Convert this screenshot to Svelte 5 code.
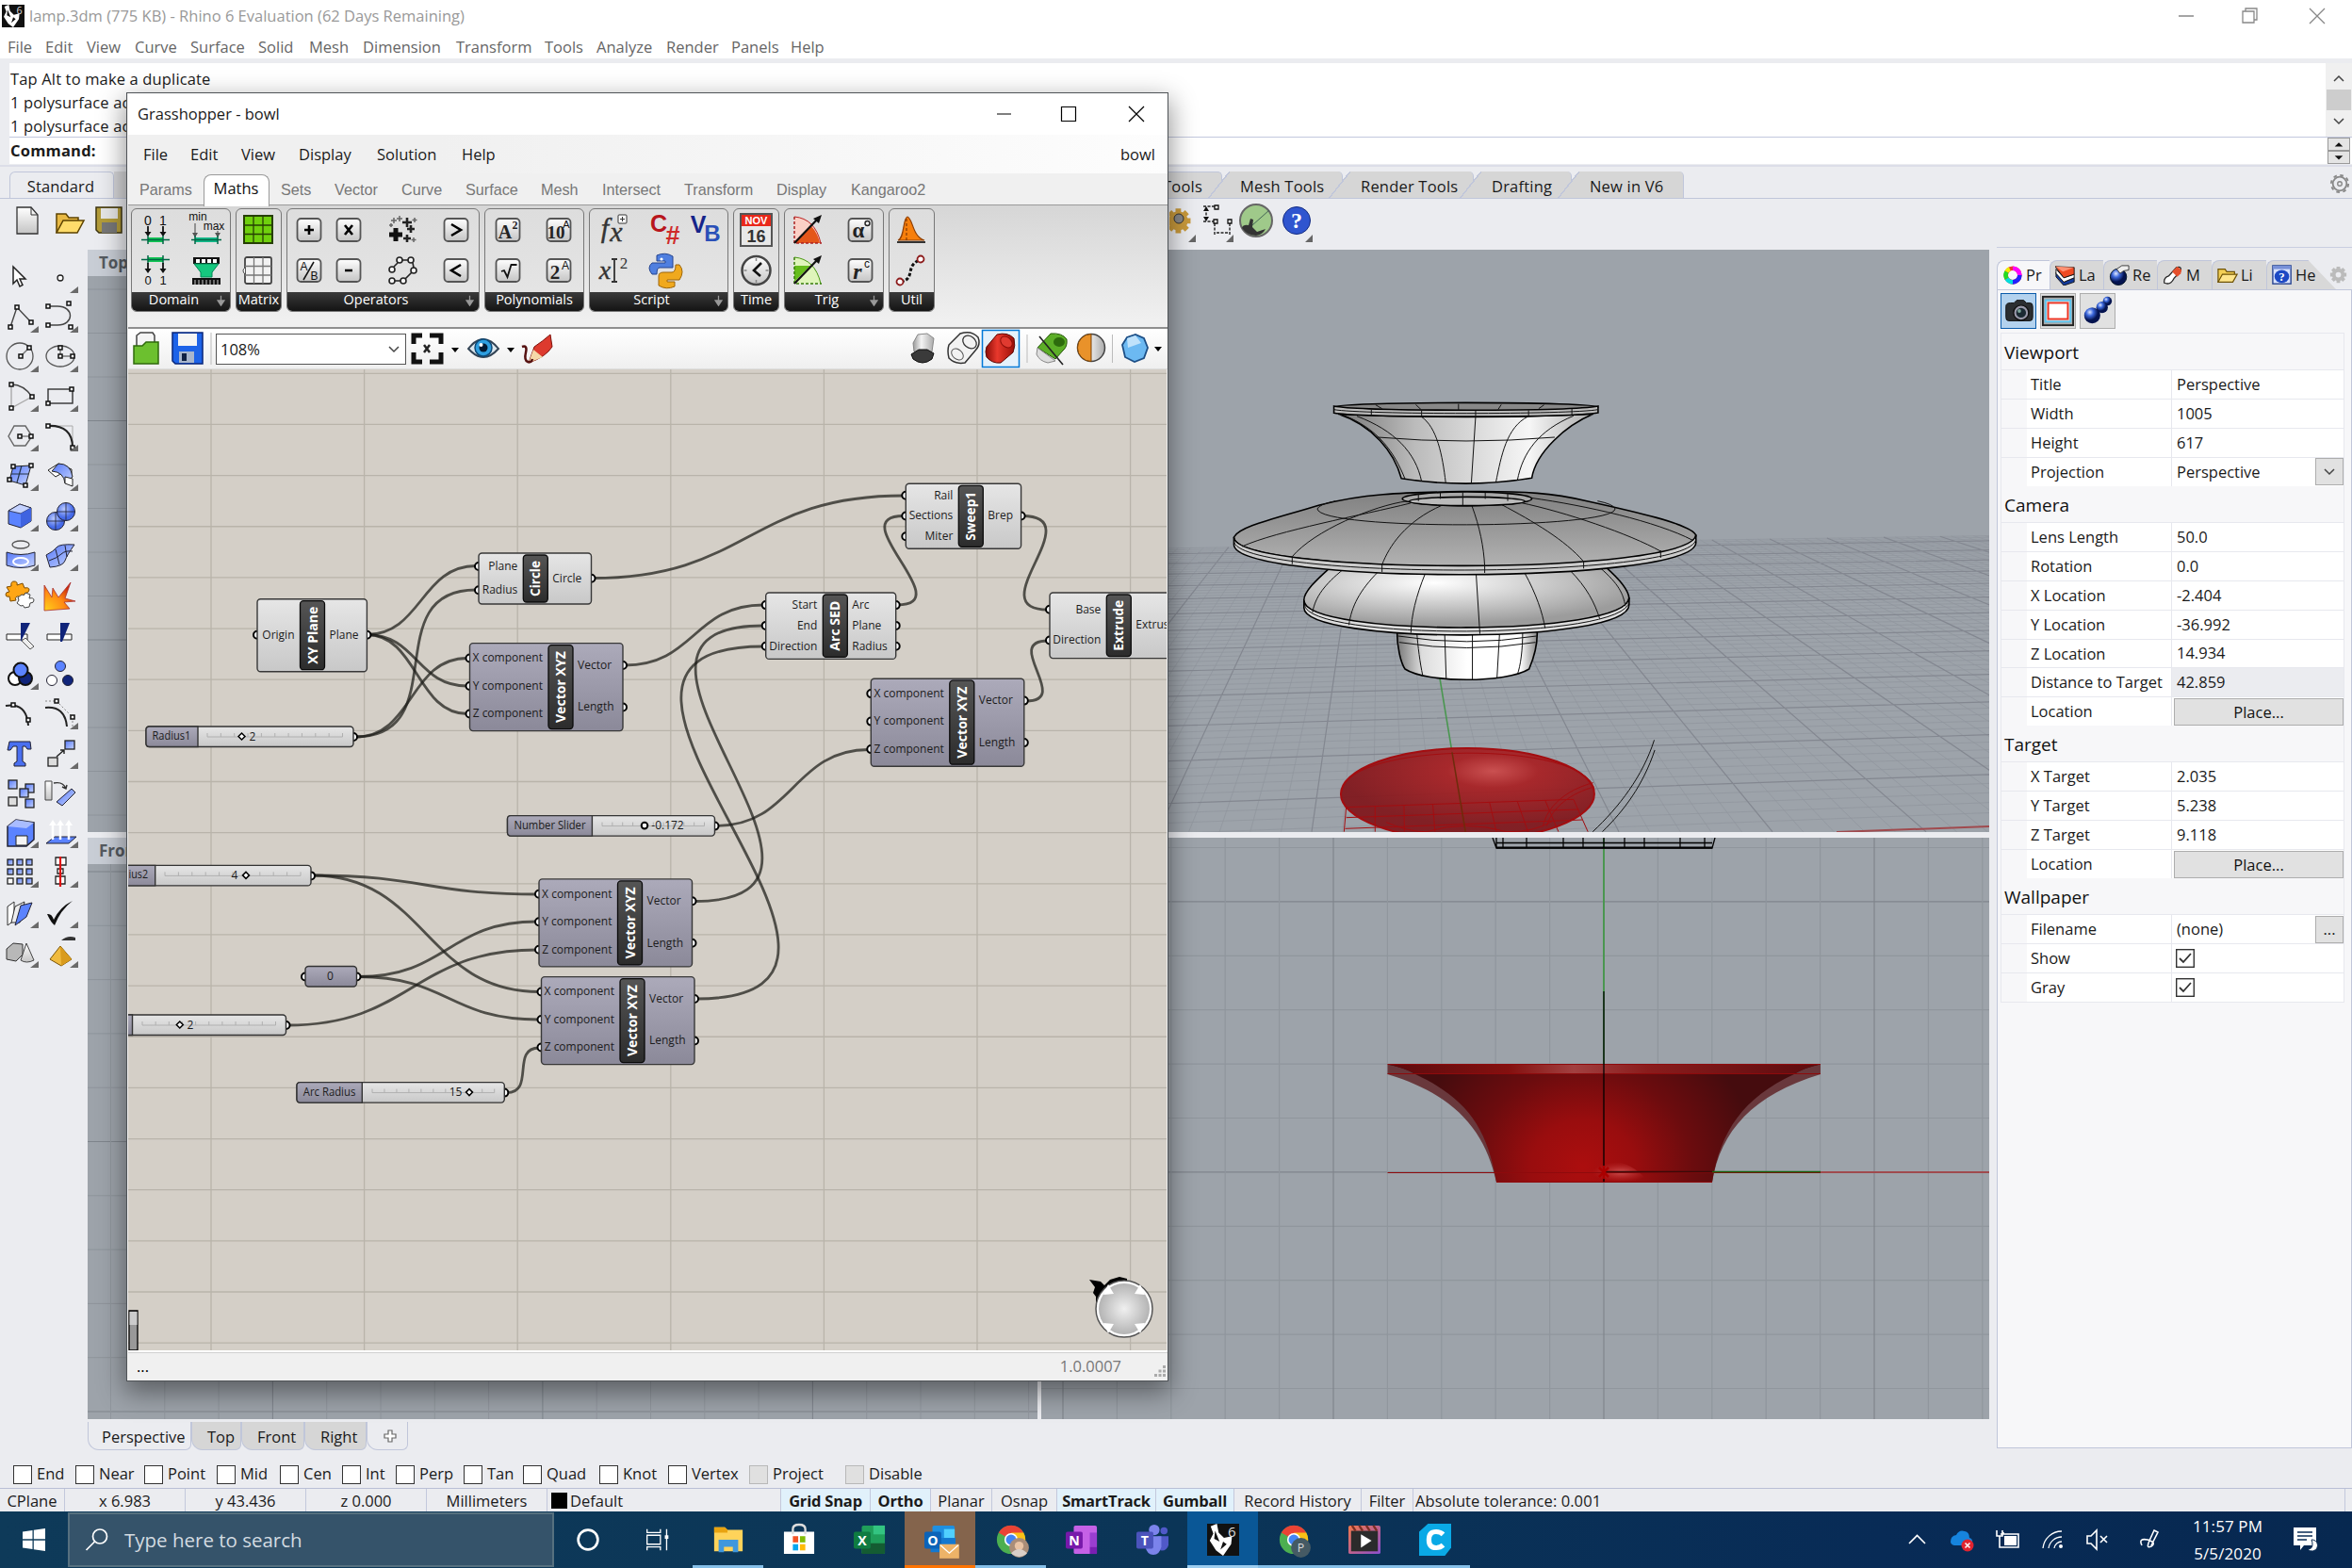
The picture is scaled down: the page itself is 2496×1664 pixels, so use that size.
<script>
  const menu = [['File',40],['Edit',44],['View',51],['Curve',59],['Surface',72],['Solid',54],['Mesh',57],['Dimension',99],['Transform',94],['Tools',55],['Analyze',74],['Render',69],['Panels',63],['Help',50]];
  const ghMenu = [['File',50],['Edit',54],['View',61],['Display',83],['Solution',90],['Help',50]];
  const ghTabsAfter = [['Sets',57],['Vector',71],['Curve',68],['Surface',80],['Mesh',65],['Intersect',87],['Transform',98],['Display',79],['Kangaroo2',90]];
  const toolTabs = [['Mesh Tools',144],['Render Tools',155],['Drafting',120],['New in V6',135]];

  const box = (g) => `<rect x="4.500" y="5" width="25" height="24" rx="4" fill="url(#gBtn)" stroke="#555" stroke-width="1.800"/>${g}`;
  const t = (s, x, y, size, extra = '') => `<text x="${x}" y="${y}" font-size="${size}" text-anchor="middle" ${extra}>${s}</text>`;
  const serif = 'font-family="Liberation Serif" font-weight="700" fill="#222"';
  const mono = 'font-family="Liberation Sans" fill="#111"';
  const arrowsDown = (y) => `<path d="M9 ${y}v9M25 ${y}v9" stroke="#111" stroke-width="1.800"/><path d="M5.500 ${y + 6}h7l-3.500 5zM21.500 ${y + 6}h7l-3.500 5z" fill="#111"/>`;
  const R = {
    dom1: t('0', 9, 12, 14, mono) + t('1', 25, 12, 14, mono) + arrowsDown(13) + '<rect x="9" y="25" width="16" height="5" fill="#12c454"/><path d="M2 27.500h30M9 23v9M25 23v9" stroke="#064" stroke-width="1.500"/>',
    dom2: '<rect x="9" y="3" width="16" height="5" fill="#12c454"/><path d="M2 5.500h30M9 1v9M25 1v9" stroke="#064" stroke-width="1.500"/>' + arrowsDown(9) + t('0', 9, 32, 13, mono) + t('1', 25, 32, 13, mono),
    minmax: t('min', 8, 7, 12, mono) + t('max', 25, 17, 12, mono) + '<path d="M5 10v14M29 18v6" stroke="#777" stroke-width="1.500"/><path d="M2 20h6l-3 5zM26 20h6l-3 5z" fill="#555"/><rect x="5" y="25" width="24" height="5" fill="#14b98a"/><path d="M1 27.500h32M5 23v9M29 23v9" stroke="#064" stroke-width="1.500"/>',
    funnel: '<path d="M3 3h28v7h-28z" fill="#111"/><path d="M6 5h4v4h-4zM12 5h4v4h-4zM18 5h4v4h-4zM24 5h4v4h-4z" fill="#fff"/><path d="M4 10h26l-7 9v5h-12v-5z" fill="#16c77e" stroke="#085"/><path d="M2 25h30v7h-30z" fill="#111"/><path d="M5 27v5M9 27v5M13 27v5M17 27v5M21 27v5M25 27v5M29 27v5" stroke="#ccc"/>',
    grid1: '<rect x="2" y="2" width="30" height="29" fill="#6fd00d" stroke="#263f04" stroke-width="2"/><path d="M12 2v29M22 2v29M2 12h30M2 21.500h30" stroke="#263f04" stroke-width="1.300"/>',
    grid2: '<rect x="3" y="3" width="28" height="28" rx="2" fill="#f2f2f2" stroke="#444" stroke-width="1.800"/><path d="M12.500 3v28M22 3v28M3 12.500h28M3 22h28" stroke="#777" stroke-width="1.300"/><path d="M3 14q-4 3 0 7" fill="#fff" stroke="#444"/>',
    plus: box('<path d="M17 12v10M12 17h10" stroke="#000" stroke-width="2.600"/>'),
    times: box('<path d="M13 12l8 10M21 12l-8 10" stroke="#000" stroke-width="2.600"/>'),
    minus: box('<path d="M13 17h8" stroke="#000" stroke-width="2.600"/>'),
    div: box(t('A', 11.500, 17, 12, mono) + t('B', 22.500, 27, 12, mono) + '<path d="M22 8L11 27" stroke="#111" stroke-width="1.500"/>'),
    gt: box('<path d="M12 11l10 6-10 6" fill="none" stroke="#000" stroke-width="2.600"/>'),
    lt: box('<path d="M22 11l-10 6 10 6" fill="none" stroke="#000" stroke-width="2.600"/>'),
    massadd: '<path d="M10 15v14M3 22h14" stroke="#111" stroke-width="5"/><path d="M22 4v10M17 9h10M26 12v8M22 16h8M22 22v8M18 26h8" stroke="#222" stroke-width="2.600"/><path d="M8 4v6M5 7h6M14 2v6M11 5h6M30 4v5M27.500 6.500h5M29 25v5M26.500 27.500h5M5 10v4M3 12h4" stroke="#666" stroke-width="1.500"/>',
    chain: '<g fill="#f4f4f4" stroke="#222" stroke-width="1.600"><circle cx="14" cy="6" r="3"/><circle cx="26" cy="6" r="3"/><circle cx="6" cy="16" r="3"/><circle cx="29" cy="17" r="3"/><circle cx="6" cy="28" r="3"/><circle cx="18" cy="28" r="3"/><path d="M17 6h6M28 9l1 5M27 19l-7 7M9 28h6M8 13l4-4" /></g>',
    a2: box(t('A', 14, 26, 20, serif) + t('2', 24.500, 16, 12, serif)),
    ten: box(t('10', 14, 26, 19, serif) + t('A', 25, 15, 11, mono)),
    sqrt: box('<path d="M10 18l3-1 3.500 7 4-13h6" fill="none" stroke="#111" stroke-width="1.800"/>'),
    twoA: box(t('2', 13, 26, 21, serif) + t('A', 24, 16, 12, mono)),
    fx: t('f', 8, 25, 30, 'font-family="Liberation Serif" font-style="italic" fill="#333" stroke="#333" stroke-width=".4"') + t('x', 20, 29, 30, 'font-family="Liberation Serif" font-style="italic" fill="#333" stroke="#333" stroke-width=".4"') + '<rect x="22" y="1" width="9" height="9" rx="1" fill="#fff" stroke="#333"/><path d="M26.500 3v5M24 5.500h5" stroke="#333"/>',
    x2: t('x', 8, 26, 28, 'font-family="Liberation Serif" font-style="italic" fill="#333" stroke="#333" stroke-width=".4"') + t('2', 28, 15, 17, 'font-family="Liberation Serif" fill="#333"') + '<path d="M15 5h6M18 5v24M15 29h6" stroke="#333" stroke-width="1.800"/>',
    csharp: t('C', 10, 19, 25, 'font-family="Liberation Sans" font-weight="700" fill="#b8151c"') + t('#', 25, 32, 27, 'font-family="Liberation Sans" font-weight="700" fill="#cf2a2a"'),
    vb: t('V', 9, 20, 25, 'font-family="Liberation Sans" font-weight="700" fill="#15248a"') + t('B', 24, 29, 24, 'font-family="Liberation Sans" font-weight="700" fill="#2a50b8"'),
    py: '<path d="M8 1q9-4 17 1v12h-14q-3 0-3 7h-5q-6-7 0-12h14v-2h-9z" fill="#4f7fe0" stroke="#26458f"/><path d="M27 34q-9 4-17-1v-10q0-4 5-4h9q4 0 4-8h4q6 7 0 16h-13v2h8z" fill="#f0a91e" stroke="#9c650a"/><circle cx="13" cy="5" r="1.600" fill="#fff"/>',
    nov: '<rect x="1" y="0" width="33" height="34" fill="#e8e8e8" stroke="#555" stroke-width="2"/><rect x="2" y="1" width="31" height="12" fill="#e9281a"/>' + t('NOV', 17.500, 11, 11, 'font-family="Liberation Sans" font-weight="700" fill="#fff"') + t('16', 17.500, 30, 18, 'font-family="Liberation Sans" font-weight="700" fill="#333"'),
    clock: '<circle cx="17.500" cy="17" r="15" fill="url(#gBtn)" stroke="#444" stroke-width="2.500"/><path d="M23 9l-8 8 7 6" fill="none" stroke="#111" stroke-width="2.600"/><path d="M17.500 4v3M17.500 27v3M4.500 17h3M27.500 17h3" stroke="#888" stroke-width="1.500"/>',
    sin: '<path d="M2 3q22 2 28 28h-28z" fill="#fbd0c6"/><path d="M2 31L20 13q7 8 9 18z" fill="#e4561a"/><path d="M2 3q22 2 28 28" fill="none" stroke="#b22"/><path d="M2 3v28h29" fill="none" stroke="#a22" stroke-dasharray="3 2" stroke-width="1.500"/><path d="M2 31L28 4" stroke="#111" stroke-width="2.200"/><path d="M31 1l-9 4 6 5z" fill="#111"/>',
    cos: '<path d="M2 3q22 2 28 28h-28z" fill="#dff5bb"/><path d="M2 12h17L2 29z" fill="#66bd1c"/><path d="M2 3q22 2 28 28" fill="none" stroke="#4a9a12"/><path d="M2 3v28h29" fill="none" stroke="#377d0a" stroke-dasharray="3 2" stroke-width="1.500"/><path d="M2 31L28 4" stroke="#111" stroke-width="2.200"/><path d="M31 1l-9 4 6 5z" fill="#111"/>',
    alpha: box(t('α', 15, 25, 23, 'font-family="Liberation Serif" font-weight="700" fill="#222"') + '<circle cx="24.500" cy="10" r="2.500" fill="none" stroke="#222" stroke-width="1.400"/>'),
    rc: box(t('r', 14, 26, 24, 'font-family="Liberation Serif" font-style="italic" font-weight="700" fill="#222"') + t('c', 24, 14, 12, mono)),
    bell: '<path d="M3 28C10 26 8 4 13 3C19 5 18 24 31 28z" fill="#f77f0c" stroke="#8f3f03" stroke-width="1.200"/><path d="M2 30h30" stroke="#333" stroke-width="2"/><path d="M12 5v23" stroke="#6b2a00" stroke-dasharray="3 2"/>',
    curve: '<path d="M6 29C22 26 10 12 26 6" fill="none" stroke="#111" stroke-width="3" stroke-dasharray="3.500 2"/><circle cx="5" cy="29" r="3.500" fill="#fff" stroke="#8d1c1c" stroke-width="1.800"/><circle cx="27" cy="5" r="3.500" fill="#fff" stroke="#8d1c1c" stroke-width="1.800"/>'
  };
  const groups = [
    { name: 'Domain', w: 106, more: true, cols: [[50, 'dom1', 'dom2'], [57, 'minmax', 'funnel']] },
    { name: 'Matrix', w: 49, cols: [[46, 'grid1', 'grid2']] },
    { name: 'Operators', w: 205, more: true, cols: [[45, 'plus', 'div'], [39, 'times', 'minus'], [75, 'massadd', 'chain'], [40, 'gt', 'lt']] },
    { name: 'Polynomials', w: 106, cols: [[48, 'a2', 'sqrt'], [60, 'ten', 'twoA']] },
    { name: 'Script', w: 148, more: true, cols: [[49, 'fx', 'x2'], [62, 'csharp', 'py'], [24, 'vb', null]] },
    { name: 'Time', w: 49, cols: [[46, 'nov', 'clock']] },
    { name: 'Trig', w: 106, more: true, cols: [[50, 'sin', 'cos'], [59, 'alpha', 'rc']] },
    { name: 'Util', w: 49, cols: [[46, 'bell', 'curve']] }
  ];

  const pt = (x, y) => `<rect x="${x - 2}" y="${y - 2}" width="4" height="4" fill="#fff" stroke="#111" stroke-width="1.500"/>`;
  const ln = (d, c = '#444', w = 1.4) => `<path d="${d}" fill="none" stroke="${c}" stroke-width="${w}"/>`;
  const sq = (x, y, f = 'url(#gBlue)', w = 9, h = 9) => `<rect x="${x}" y="${y}" width="${w}" height="${h}" fill="${f}" stroke="#222" stroke-width="1.300"/>`;
  const tools = [
    ['<path d="M14 9v18l4-4 3 7 3-1.500-3-6.500h6z" fill="#fff" stroke="#222" stroke-width="1.500"/>', 0],
    ['<ellipse cx="22" cy="21" rx="3" ry="3" fill="#fff" stroke="#222" stroke-width="1.300"/>', 1],
    [ln('M11 31L18 10L33 26') + pt(11, 31) + pt(18, 10) + pt(33, 26), 1],
    [ln('M9 9H19C37 9 37 29 19 29H9') + pt(9, 9) + pt(9, 29) + pt(31, 6) + pt(33, 31), 1],
    ['<circle cx="21" cy="20" r="14" fill="none" stroke="#555" stroke-width="1.300"/>' + ln('M22 20l9-9', '#777') + pt(22, 20) + pt(31, 11), 1],
    ['<ellipse cx="22" cy="20" rx="15" ry="11" fill="none" stroke="#555" stroke-width="1.300"/>' + ln('M22 11v9h14', '#777') + pt(22, 11) + pt(22, 20) + pt(35, 20), 1],
    [ln('M12 8v25L34 21', '#aaa') + ln('M12 8Q25 8 34 21') + pt(12, 8) + pt(12, 33) + pt(34, 21), 1],
    ['<rect x="9" y="13" width="26" height="15" fill="none" stroke="#333" stroke-width="1.400"/>' + pt(9, 28) + pt(34, 13), 1],
    [ln('M15 10h12l7 11-7 10h-12l-6-10z', '#666') + ln('M21 21h12', '#777') + pt(21, 21) + pt(33, 21), 1],
    [ln('M9 10h26v24', '#aaa', 1) + ln('M9 10Q35 9 35 33', '#222', 2.2) + pt(9, 10) + pt(35, 33), 1],
    ['<path d="M14 11L33 10L27 31L10 26z" fill="url(#gBlue)" stroke="#222"/>' + ln('M12 19l18 0M23 10l-5 18', '#234', 1.200) + pt(14, 11) + pt(33, 10) + pt(27, 31) + pt(10, 25), 1],
    ['<path d="M9 15L20 8L34 14L34 22Q26 15 17 22z" fill="#fff" stroke="#222"/><path d="M20 8Q33 8 35 22L27 29Q26 17 13 16z" fill="url(#gBlue)" stroke="#222"/><path d="M27 22l8 2v8l-8-3z" fill="#fff" stroke="#222"/>', 1],
    ['<path d="M9 15L21 8l12 4v14L22 33 9 29z" fill="#5b83ff" stroke="#223"/><path d="M9 15L21 8l12 4-11 6z" fill="#c4d2ff" stroke="#223" stroke-width=".800"/><path d="M22 18v15l11-7V12z" fill="#3f63e0"/>', 1],
    ['<circle cx="17" cy="26" r="9.500" fill="url(#gBlueR)" stroke="#223"/><circle cx="28" cy="16" r="9.500" fill="url(#gBlueR)" stroke="#223"/><path d="M8 26h18M17 17v18M19 16h18M28 7v18" stroke="#223" stroke-width=".800"/>', 1],
    ['<ellipse cx="22" cy="9" rx="9" ry="4" fill="none" stroke="#555" stroke-width="1.300"/><path d="M7 17q15 5 30 0v14q-15 5-30 0z" fill="url(#gBlue)" stroke="#223"/><ellipse cx="22" cy="27" rx="8" ry="4" fill="none" stroke="#fff" stroke-width="2"/>', 1],
    ['<path d="M7 20Q15 16 18 12T37 9Q29 20 27 26T11 33z" fill="url(#gBlue)" stroke="#223"/>' + ln('M10 26q9-3 13-7t12-3M17 14l4 16M27 10l2 12', '#223', 1), 1],
    ['<path d="M7 12l5-1q-1-5 3-5t3 4l6-2 2 5q5-1 5 2t-5 4l1 5-6 1q0-4-3-3t-1 4l-6 1-1-5q-4 1-4-2t4-3z" fill="#ffa615" stroke="#7d4b00"/><path d="M19 23l4-3q3 2 4-2l5 2-1 4q5-1 5 2t-4 3l-1 4-5 1q-1-4-4-2l-4-3 2-3z" fill="#fff" stroke="#444"/>', 0],
    ['<path d="M5 37V10l8 13 1-10 6 10L33 7l-6 17 11 3-12 1 6 7-27 2z" fill="url(#gFire)" stroke="#a33" stroke-width=".800"/>', 0],
    ['<path d="M7 20h22v6h-22z" fill="#fff" stroke="#222"/><path d="M22 8h10l-10 20z" fill="#10247a"/><path d="M23 27l4-3 9 9-4 3z" fill="#eee" stroke="#555"/>', 0],
    ['<path d="M8 20h26v6h-26z" fill="#fff" stroke="#222"/><path d="M22 8h10l-8 20h-2z" fill="#10247a"/>', 0],
    ['<circle cx="16" cy="25" r="7" fill="#fff" stroke="#111" stroke-width="2"/><circle cx="27" cy="25" r="7" fill="#10247a" stroke="#111" stroke-width="2"/><circle cx="22" cy="16" r="7.500" fill="#5b83ff" stroke="#111" stroke-width="2"/>', 1],
    ['<circle cx="22" cy="12" r="5.500" fill="#5b83ff" stroke="#223"/><circle cx="13" cy="27" r="5.500" fill="#fff" stroke="#223"/><circle cx="30" cy="27" r="5.500" fill="#10247a" stroke="#223"/>', 0],
    [ln('M6 12Q28 8 30 33', '#222', 2) + pt(14, 11) + pt(30, 27), 0],
    [ln('M6 14Q27 12 29 34', '#222', 2) + '<path d="M6 7h12l17 17v10" fill="none" stroke="#888" stroke-dasharray="2 2"/>' + pt(18, 7) + pt(35, 24), 1],
    ['<path d="M10 8h22l1 8h-4l-2-3h-3v16l3 2v3h-12v-3l3-2V13h-4l-3 4h-3z" fill="#4a6ff0" stroke="#223"/>', 0],
    [sq(9, 25, '#ddd', 10, 9) + sq(27, 7, 'url(#gBlue)', 10, 9) + ln('M18 24l8-7m-4 0h4v4', '#222'), 1],
    [sq(9, 7) + sq(9, 25, '#ddd') + sq(27, 11) + sq(21, 16) + sq(27, 27), 0],
    ['<path d="M6 8h7v20h-7z" fill="url(#gBtn)" stroke="#444"/><path d="M18 30l16-14 4 4-14 14z" fill="url(#gBlue)" stroke="#223"/>' + ln('M15 10q10-2 13 6m-4-2l4 2 1-4', '#333'), 0],
    ['<path d="M8 14l9-7 19 3v18l-8 7H8z" fill="#5b83ff" stroke="#223" stroke-width="1.500"/><path d="M8 14l9-7 19 3-8 6z" fill="#a9bcff"/><path d="M17 24h12v10h-12z" fill="#f5f5f5" stroke="#222"/>', 1],
    ['<path d="M7 32l9-7h23l-8 7z" fill="#5b83ff" stroke="#223"/><path d="M14 28V10M22 28V10M31 28V10" stroke="#fff" stroke-width="2.500"/><path d="M10 13l4-6 4 6zM18 13l4-6 4 6zM27 13l4-6 4 6z" fill="#fff"/>', 1],
    [[8, 18, 28].map((x) => [7, 17, 27].map((y) => sq(x, y, x > 8 || y < 20 ? 'url(#gBlue)' : '#fff', 6, 6)).join('')).join(''), 1],
    ['<path d="M17 5h11v8h-11zM19 17h6v5h-6zM17 25h10v8h-10z" fill="#fff" stroke="#222" stroke-width="1.300"/><path d="M22 4v32" stroke="#e01010" stroke-width="2.200"/>', 1],
    ['<path d="M8 14l7-5v20l-7 5z" fill="#fff" stroke="#333"/><path d="M16 14l10-5-5 22h-9z" fill="#eee" stroke="#333"/><path d="M22 13l12-3-6 15-12 9z" fill="#5b83ff" stroke="#223"/>', 1],
    ['<path d="M8 22q5-1 7 6Q22 14 35 8Q22 18 16 34Q12 31 8 22z" fill="#111"/>', 1],
    ['<path d="M7 17l7-6 10 1v11l-7 7-10-2z" fill="#b8b8b8" stroke="#333"/><path d="M28 11l8 18q-8 4-14 0z" fill="url(#gBtn)" stroke="#444"/>', 1],
    ['<path d="M11 28l11-14 12 14-11 7z" fill="#f0bb3f" stroke="#7a5508"/><path d="M22 14l1 21 11-7z" fill="#d99b1d"/><path d="M23 8q7-6 15-3v3q-8 0-15 0z" fill="#333"/>', 1]
  ];

  // Perspective floor: two line families, each with its own vanishing point on the horizon.
  const horizon = 376;
  const lineB = (k) => {
    const u = 1 / (0.001879 + 0.000219 * k);
    const y = (x) => (horizon + u - ((x - 1240) * u) / 13500).toFixed(1);
    return `M1105 ${y(1105)}L2111 ${y(2111)}`;
  };
  const lineA = (k) => {
    const X = 1555 + 32.6 * k;
    let yt = 580, xt = 0;
    for (let n = 0; n < 3; n++) {
      xt = 1465 + ((X - 1465) * (yt - horizon)) / 506.7;
      yt = 581.7 - (xt - 1240) * 0.01524;
    }
    return `M${xt.toFixed(1)} ${yt.toFixed(1)}L${X.toFixed(1)} 882.7`;
  };
  const minorB = [], majorB = [], minorA = [], majorA = [];
  for (let i = 1; i <= 68; i++) (i % 5 ? minorB : majorB).push(lineB(i / 5));
  for (let i = -36; i <= 52; i++) if (i) (i % 5 ? minorA : majorA).push(lineA(i));
  const range = (a, b, s) => { const r = []; for (let v = a; v < b; v += s) r.push(v); return r; };

  const vec = (dx, dy) => ({
    x: 498.5 + dx, y: 683.6 + dy, w: 162.5, h: 93, purple: true, tx: 582 + dx, title: 'Vector XYZ', tl: 76,
    ins: [['X component', 699 + dy], ['Y component', 728.5 + dy], ['Z component', 758 + dy]], outs: [['Vector', 706.5 + dy], ['Length', 751 + dy]]
  });
  const nodes = [
    { x: 273, y: 636.7, w: 116.4, h: 77, tx: 318.5, title: 'XY Plane', tl: 61, ins: [['Origin', 674.3]], outs: [['Plane', 674.3]] },
    { x: 508, y: 588, w: 119.5, h: 54, tx: 555.3, title: 'Circle', tl: 38, ins: [['Plane', 601.5], ['Radius', 626.8]], outs: [['Circle', 614.3]] },
    vec(0, 0), vec(425.8, 37.6), vec(73.500, 250.3), vec(76, 354),
    { x: 961.3, y: 514.3, w: 122.3, h: 69, tx: 1017.3, title: 'Sweep1', tl: 52, ins: [['Rail', 526.3], ['Sections', 548], ['Miter', 569.8]], outs: [['Brep', 548]] },
    { x: 812.7, y: 630, w: 138, h: 70.4, tx: 873.3, title: 'Arc SED', tl: 53, ins: [['Start', 642.6], ['End', 664.4], ['Direction', 686.2]], outs: [['Arc', 642.6], ['Plane', 664.4], ['Radius', 686.2]] },
    { x: 1114, y: 630, w: 150, h: 69.6, tx: 1174.3, title: 'Extrude', tl: 54, ins: [['Base', 647.3], ['Direction', 680]], outs: [['Extrus', 664]] }
  ];
  const wires = [
    [389, 674.5, 505, 601.5, 58], [389, 674.5, 496, 729, 54], [389, 674.5, 496, 758.500, 54],
    [377, 783, 505, 627, 106], [377, 783, 496, 699.5, 62], [629, 614.5, 959, 527, 165], [663, 707, 810, 643, 74],
    [737, 957.5, 810, 665, 215], [739, 1061, 810, 687, 270], [952, 643, 959, 548.5, 67], [1085, 548.5, 1112, 648, 74],
    [1089, 745, 1112, 681, 49], [761, 877.3, 922, 796.5, 80], [332, 930, 570, 950, 119], [332, 930, 572, 1053.5, 120],
    [380, 1037.5, 570, 979, 95], [380, 1037.5, 572, 1083, 96], [305, 1089, 570, 1009, 132], [538, 1160.5, 572, 1113, 30]
  ];
  const sliders = [
    { x: 155, y: 772, w: 220, s: 210, label: 'Radius1', lx: 161.4, lw: 41, k: 256.5, v: '2', vx: 268, a: 220, b: 363.5 },
    { x: 538.5, y: 866.6, w: 220, s: 628.4, label: 'Number Slider', lx: 545.5, lw: 76, k: 684, round: true, v: '-0.172', vx: 708.5, a: 639, b: 747.5 },
    { x: 109, y: 919.4, w: 221, s: 164.7, label: 'ius2', lx: 136.500, lw: 20.500, k: 261, v: '4', vx: 249, a: 175, b: 319 },
    { x: 84, y: 1078, w: 219.5, s: 140.5, label: '', lx: 90, lw: 0, k: 190.8, v: '2', vx: 202, a: 151, b: 292.5 },
    { x: 315, y: 1149.6, w: 220.3, s: 384.3, label: 'Arc Radius', lx: 321.8, lw: 55.5, k: 498, v: '15', vx: 483.5, a: 395, b: 524.7 }
  ];

  const props = [
    ['Viewport', [['Title', 'Perspective'], ['Width', '1005'], ['Height', '617'], ['Projection', 'Perspective', 'drop']]],
    ['Camera', [['Lens Length', '50.0'], ['Rotation', '0.0'], ['X Location', '-2.404'], ['Y Location', '-36.992'], ['Z Location', '14.934'], ['Distance to Target', '42.859', 'ro'], ['Location', 'Place...', 'btn']]],
    ['Target', [['X Target', '2.035'], ['Y Target', '5.238'], ['Z Target', '9.118'], ['Location', 'Place...', 'btn']]],
    ['Wallpaper', [['Filename', '(none)', 'dots'], ['Show', '', 'check'], ['Gray', '', 'check']]]
  ];
  const panelTabs = [
    ['Pr', 56, '<circle cx="12" cy="12" r="8" fill="none" stroke="#e33" stroke-width="5"/><path d="M12 4a8 8 0 0 1 8 8" fill="none" stroke="#f0f" stroke-width="5"/><path d="M20 12a8 8 0 0 1-8 8" fill="none" stroke="#22f" stroke-width="5"/><path d="M12 20a8 8 0 0 1-7-4" fill="none" stroke="#0dd" stroke-width="5"/><path d="M5 16a8 8 0 0 1 0-8" fill="none" stroke="#2d2" stroke-width="5"/><path d="M5 8a8 8 0 0 1 3.500-3.200" fill="none" stroke="#ee0" stroke-width="5"/>'],
    ['La', 57, '<path d="M1 9l9 11 12-5v5l-12 4L1 14z" fill="#123a9c" stroke="#111"/><path d="M1 5l9 10 12-4v4l-12 5L1 10z" fill="#fff" stroke="#111"/><path d="M0 2l22 1v8l-12 4z" fill="#ef4a22" stroke="#111"/><path d="M0 2l22 1-13 5z" fill="#ff9173"/>'],
    ['Re', 57, '<circle cx="11" cy="14" r="9.500" fill="url(#gNavy)" stroke="#012"/><path d="M9 5l6-4h8v5l-6 1-4 3z" fill="#eee" stroke="#333"/>'],
    ['M', 58, '<path d="M2 21q-1-6 5-8l9-10q6-2 5 4l-8 9q-4 8-11 5z" fill="#fff" stroke="#222" stroke-width="1.400"/><path d="M11 8l6-6 5 4-1 4-4 4z" fill="#e5502c"/>'],
    ['Li', 58, '<path d="M1 20V5h8l2 3h9v3" fill="#f3cf55" stroke="#6e5205" stroke-width="1.300"/><path d="M1 20l5-9h17l-5 9z" fill="#ffe68c" stroke="#6e5205" stroke-width="1.300"/>'],
    ['He', 74, '<rect x="1" y="1" width="21" height="21" fill="#d8e2ff" stroke="#25428f" stroke-width="1.500"/><rect x="1" y="1" width="21" height="4" fill="#7790d8"/><ellipse cx="11.500" cy="13.500" rx="8.500" ry="7.500" fill="#1d49c4"/><text x="11.500" y="19" font-size="14" font-weight="700" text-anchor="middle" font-family="Liberation Serif" fill="#fff">?</text>']
  ];

  const viewTabs = [['Perspective', 110], ['Top', 53], ['Front', 67], ['Right', 66]];
  const snaps = [['End', 66], ['Near', 73], ['Point', 77], ['Mid', 67], ['Cen', 66], ['Int', 57], ['Perp', 72], ['Tan', 63], ['Quad', 81], ['Knot', 73], ['Vertex', 86], ['Project', 102, 1], ['Disable', 90, 1]];
  const status = [['CPlane', 69], ['x 6.983', 128], ['y 43.436', 128], ['z 0.000', 128], ['Millimeters', 128], ['Default', 248, 'lay'], ['Grid Snap', 95, 'on'], ['Ortho', 64, 'on'], ['Planar', 65], ['Osnap', 69], ['SmartTrack', 105, 'on'], ['Gumball', 83, 'on'], ['Record History', 135], ['Filter', 55], ['Absolute tolerance: 0.001', 989, 'tol']];

  const chrome = '<circle cx="18" cy="18" r="16" fill="#4caf50"/><path d="M18 18L4 10a16 16 0 0 1 28 0z" fill="#ea4335"/><path d="M18 10h14a16 16 0 0 1-13 24l6-14z" fill="#fbc116"/><circle cx="18" cy="18" r="7.500" fill="#fff"/><circle cx="18" cy="18" r="5.800" fill="#4285f4"/>';
  const rhino = '<rect width="36" height="36" fill="#111"/><path d="M4 3l7-3 2 10 6 6 9-2-1 9-9 13-8-6-7-11 4-8z" fill="#fff"/><path d="M9 8l5 12-6-3zM18 20l4 3-7 6z" fill="#111"/><text x="28" y="15" font-size="16" text-anchor="middle" font-family="Open Sans" fill="#ddd">6</text>';
  const apps = [
    ['under', '<path d="M2 4h12l3 3h17v24h-32z" fill="#ffd35a"/><path d="M2 4h12l3 3v3h-15z" fill="#e9a310"/><path d="M7 32V18h22v14h-6v-6h-10v6z" fill="#3f97dd"/>'],
    ['', '<path d="M1 9h34v25h-34z" fill="#fff"/><path d="M11 12V6q0-5 7-5t7 5v6" fill="none" stroke="#ddd" stroke-width="2.500"/><path d="M11 14h6v7h-6z" fill="#f35325"/><path d="M19 14h6v7h-6z" fill="#81bc06"/><path d="M11 23h6v7h-6z" fill="#05a6f0"/><path d="M19 23h6v7h-6z" fill="#ffba08"/>'],
    ['', '<rect x="9" y="2" width="26" height="32" rx="2" fill="#1f9e5a"/><path d="M22 2h13v10h-13z" fill="#33c481"/><path d="M9 22h26v10q0 2-2 2h-24z" fill="#145c32"/><rect x="0" y="9" width="19" height="19" rx="2" fill="#0f7b41"/><text x="9.500" y="24" font-size="15" font-weight="700" text-anchor="middle" font-family="Open Sans" fill="#fff">X</text>'],
    ['outlook', '<rect x="9" y="2" width="25" height="22" rx="2" fill="#1f8fe0"/><path d="M22 6h12v10h-12z" fill="#50d0ff"/><path d="M7 16h28v16h-28z" fill="#1378d0"/><rect x="0" y="9" width="19" height="19" rx="2" fill="#0c63b8"/><text x="9.500" y="24" font-size="15" font-weight="700" text-anchor="middle" font-family="Open Sans" fill="#fff">O</text><rect x="17" y="23" width="22" height="16" fill="#edb368"/><path d="M18 24l10 9 10-9" fill="none" stroke="#fff" stroke-width="1.500"/>'],
    ['under', chrome + '<circle cx="27" cy="27" r="11" fill="#a98d78"/><circle cx="27" cy="25" r="5" fill="#e8c3a4"/><path d="M18 33q9-9 18 0-9 8-18 0z" fill="#d9cfc8"/>'],
    ['', '<rect x="9" y="2" width="26" height="32" rx="2" fill="#c561e6"/><path d="M27 10h8v16h-8z" fill="#9a3ed0"/><path d="M27 26h8v8h-8z" fill="#7a1fb2"/><rect x="0" y="9" width="19" height="19" rx="2" fill="#7719aa"/><text x="9.500" y="24" font-size="15" font-weight="700" text-anchor="middle" font-family="Open Sans" fill="#fff">N</text>'],
    ['', '<circle cx="20" cy="7" r="6" fill="#7b83eb"/><circle cx="31" cy="8" r="4" fill="#5059c9"/><path d="M24 14h12v10q-2 7-9 6z" fill="#5059c9"/><path d="M10 14h18v12q-2 9-9 9t-9-9z" fill="#7b83eb"/><rect x="0" y="9" width="19" height="19" rx="2" fill="#4b53bc"/><text x="9.500" y="24" font-size="15" font-weight="700" text-anchor="middle" font-family="Open Sans" fill="#fff">T</text>'],
    ['active', rhino],
    ['under', chrome + '<circle cx="26" cy="27" r="11" fill="#455a64"/><text x="26" y="32" font-size="13" text-anchor="middle" font-family="Open Sans" fill="#ddd">P</text>'],
    ['under', '<rect x="0" y="2" width="36" height="32" rx="2" fill="url(#gFilm)"/><path d="M3 8h30v23h-30z" fill="#2b2b2b"/><path d="M4 2l4 6M12 2l4 6M20 2l4 6M28 2l4 6" stroke="#7b2f24" stroke-width="2.500"/><path d="M14 12l12 7-12 8z" fill="#fff"/>'],
    ['under', '<path d="M10 0h26v27l-7 9H0V9z" fill="#0aa9e6"/><path d="M27 12q-3-3-8-3-8 0-8 9t8 9q5 0 8-3" fill="none" stroke="#fff" stroke-width="5.500"/>']
  ];
  const gear = '<path d="M12 3v18M3 12h18M5.600 5.600l12.800 12.800M18.400 5.600L5.600 18.400" stroke="currentColor" stroke-width="4"/><circle cx="12" cy="12" r="7" fill="currentColor"/>';
</script>

<svg class="defs" width="0" height="0">
  <defs>
    <linearGradient id="gBtn" x1="0" y1="0" x2="0" y2="1"><stop offset="0" stop-color="#fff" /><stop offset="1" stop-color="#c4c4c4" /></linearGradient>
    <linearGradient id="gBlue" x1="0" y1="0" x2="1" y2="1"><stop offset="0" stop-color="#5578f8" /><stop offset="1" stop-color="#c5d3ff" /></linearGradient>
    <radialGradient id="gBlueR" cx=".4" cy=".35"><stop offset="0" stop-color="#b9c9ff" /><stop offset="1" stop-color="#4468e6" /></radialGradient>
    <radialGradient id="gNavy" cx=".35" cy=".3"><stop offset="0" stop-color="#dfe8ff" /><stop offset=".45" stop-color="#3c68dc" /><stop offset="1" stop-color="#04134f" /></radialGradient>
    <radialGradient id="gFire" cx="0" cy="1" r="1.100"><stop offset="0" stop-color="#ffd21a" /><stop offset=".6" stop-color="#ff8a14" /><stop offset="1" stop-color="#c8260a" /></radialGradient>
    <linearGradient id="gFilm" x1="0" y1="0" x2="1" y2="1"><stop offset="0" stop-color="#f2784b" /><stop offset="1" stop-color="#8a4fd0" /></linearGradient>
    <linearGradient id="gNode" x1="0" y1="0" x2="0" y2="1"><stop offset="0" stop-color="#e6e6e6" /><stop offset="1" stop-color="#c8c8c8" /></linearGradient>
    <linearGradient id="gPurple" x1="0" y1="0" x2="0" y2="1"><stop offset="0" stop-color="#acaaba" /><stop offset="1" stop-color="#8b8999" /></linearGradient>
    <linearGradient id="gDark" x1="0" y1="0" x2="0" y2="1"><stop offset="0" stop-color="#555" /><stop offset="1" stop-color="#2c2c2c" /></linearGradient>
    <linearGradient id="gRed"><stop offset="0" stop-color="#8c0d08" /><stop offset=".4" stop-color="#e8382c" /><stop offset="1" stop-color="#9b0e08" /></linearGradient>
    <linearGradient id="gSteel"><stop offset="0" stop-color="#999" /><stop offset=".4" stop-color="#f4f4f4" /><stop offset="1" stop-color="#aaa" /></linearGradient>
    <linearGradient id="lampA"><stop offset="0" stop-color="#777" /><stop offset=".3" stop-color="#bbb" /><stop offset=".75" stop-color="#f6f6f6" /><stop offset="1" stop-color="#aaa" /></linearGradient>
    <linearGradient id="lampB" x1="0" y1="0" x2="0" y2="1"><stop offset="0" stop-color="#808080" /><stop offset="1" stop-color="#b2b2b2" /></linearGradient>
    <radialGradient id="lampC" cx=".4" cy=".25" r=".65"><stop offset="0" stop-color="#fff" /><stop offset=".35" stop-color="#dcdcdc" /><stop offset="1" stop-color="#9c9c9c" /></radialGradient>
    <linearGradient id="lampD"><stop offset="0" stop-color="#777" /><stop offset=".18" stop-color="#ddd" /><stop offset=".5" stop-color="#fff" /><stop offset=".88" stop-color="#fff" /><stop offset="1" stop-color="#888" /></linearGradient>
    <radialGradient id="redTop" cx=".6" cy=".25" r=".6"><stop offset="0" stop-color="#cc4c4c" /><stop offset=".3" stop-color="#a82225" /><stop offset="1" stop-color="#80191e" /></radialGradient>
    <radialGradient id="redBowl" gradientUnits="userSpaceOnUse" cx="1680" cy="1238" r="185" gradientTransform="translate(0 124) scale(1 .9)"><stop offset="0" stop-color="#ac0e0e" /><stop offset=".3" stop-color="#990d0e" /><stop offset=".62" stop-color="#6c0c0e" /><stop offset="1" stop-color="#450c0e" /></radialGradient>
    <radialGradient id="glint"><stop offset="0" stop-color="#d86060" stop-opacity=".8" /><stop offset="1" stop-color="#c03030" stop-opacity="0" /></radialGradient>
    <linearGradient id="redRim"><stop offset="0" stop-color="#5c0b0e" /><stop offset=".28" stop-color="#84100f" /><stop offset=".43" stop-color="#a24040" /><stop offset=".6" stop-color="#8a1c1c" /><stop offset="1" stop-color="#5c0b0e" /></linearGradient>
    <radialGradient id="compass"><stop offset="0" stop-color="#f0f0f0" /><stop offset="1" stop-color="#b4b4b4" /></radialGradient>
  </defs>
</svg>

<div class="screen">
  <header class="title">
    <svg class="logo" viewBox="0 0 36 36">{@html rhino}</svg>
    <span class="cap">lamp.3dm (775 KB) - Rhino 6 Evaluation (62 Days Remaining)</span>
    <svg class="winbtns" viewBox="0 0 184 34"><path d="M0 17h16M68 12h12v12h-12zM71 12v-3h12v12h-3M139 9l16 16M155 9l-16 16" fill="none" stroke="#888" stroke-width="1.300" /></svg>
  </header>
  <nav class="menu">{#each menu as [m, w]}<span style:width="{w}px">{m}</span>{/each}</nav>

  <section class="command">
    <div class="hist">
      <div class="lines"><p>Tap Alt to make a duplicate</p><p>1 polysurface ac</p><p>1 polysurface ac</p></div>
      <div class="sbar"><svg viewBox="0 0 12 8"><path d="M1 7l5-5 5 5" /></svg><i></i><svg viewBox="0 0 12 8"><path d="M1 1l5 5 5-5" /></svg></div>
    </div>
    <div class="prompt"><b>Command:</b><div class="spin"><svg viewBox="0 0 24 14"><path d="M7 10l5-5 5 5z" /></svg><svg viewBox="0 0 24 14"><path d="M7 5l5 5 5-5z" /></svg></div></div>
  </section>

  <div class="tooltabs">
    <div class="std">Standard</div>
    <div class="hiddentabs"></div>
    <div class="tab first">Tools</div>
    {#each toolTabs as [name, w]}<div class="tab slant" style:width="{w}px">{name}</div>{/each}
    <svg class="gear" viewBox="0 0 24 24"><circle cx="12" cy="12" r="8" fill="none" stroke="#888" stroke-width="2" /><circle cx="12" cy="12" r="10" fill="none" stroke="#888" stroke-width="2" stroke-dasharray="4 3.850" /><circle cx="12" cy="12" r="2.500" fill="none" stroke="#888" stroke-width="1.500" /></svg>
  </div>
  <div class="toolbar">
    <svg viewBox="0 0 130 54"><path d="M18 9h15l7 8v20h-22z" fill="url(#gBtn)" stroke="#333" stroke-width="1.300" /><path d="M33 9v8h7" fill="none" stroke="#333" /><path d="M60 36V16h10l3 4h10v5" fill="#e8b944" stroke="#5c4200" stroke-width="1.500" /><path d="M60 36l7-13h22l-7 13z" fill="#ffdc6b" stroke="#5c4200" stroke-width="1.500" /><path d="M102 9h27v27h-24l-3-3z" fill="#b39c3a" stroke="#3e3510" stroke-width="1.500" /><path d="M107 10h18v11h-18z" fill="#e6e6e6" /><path d="M108 25h16v11h-16z" fill="#777" /></svg>
    <svg class="rt" viewBox="0 0 160 54"><g color="#c99a3c" transform="translate(-8 6) scale(1.450)">{@html gear}</g><circle cx="10" cy="21" r="5" fill="#888" stroke="#333" /><path d="M29 39v8h-8zM69 39v8h-8zM153 39v8h-8z" transform="translate(-1 -1)" fill="#666" /><path d="M36 8h12v2M36 24h14M39 10v12M48 26v12M64 26v12M50 36h12" stroke="#222" fill="none" stroke-dasharray="3 1.500" stroke-width="1.400" /><path d="M48 7h4v4h-4zM47 22h4v4h-4zM62 22h4v4h-4z" fill="#fff" stroke="#111" stroke-width="1.300" /><path d="M36 13l3-5 3 5zM36 19l3 5 3-5z" fill="#111" /><circle cx="92" cy="23" r="17" fill="#9fc98a" stroke="#666" stroke-width="2" /><path d="M77 31q1-4 7-3l2-7 3 1-1 8 5 5 9-3q-3 6-10 7-9 0-15-8z" fill="#333" /><path d="M88 28L106 12" stroke="#465" /><circle cx="135" cy="23" r="14.500" fill="#2f55cf" stroke="#122a80" /><text x="135" y="31" font-size="24" font-weight="700" text-anchor="middle" font-family="Liberation Serif" fill="#fff">?</text></svg>
  </div>

  <main>
    <aside class="tools">
      {#each tools as [g, tri]}<svg viewBox="0 0 42 42">{@html g}{#if tri}<path d="M41 30v7h-9z" fill="#6a6a6a" />{/if}</svg>{/each}
    </aside>

    <section class="views">
      <div class="vp">
        <svg viewBox="93 265 1008 618" preserveAspectRatio="none">
          {#each range(307, 883, 46.5) as y, i}<path d="M93 {y}H1101" stroke={i % 5 === 3 ? '#7f858c' : '#8e949b'} />{/each}
        </svg>
        <span class="vlabel">Top</span>
      </div>
      <div class="vp">
        <svg viewBox="1105 265 1006 618">
          <path d={minorB.join('') + minorA.join('')} stroke="#90969d" stroke-width="1" fill="none" opacity=".75" />
          <path d={majorB.join('') + majorA.join('')} stroke="#838790" stroke-width="1.200" fill="none" />
          <path d="M1528 720L1555 883" stroke="#4a9650" stroke-width="1.600" />
          <path d="M1949 883L2111 877" stroke="#a04a4e" stroke-width="2" />
          <g class="mesh" transform="translate(1230 380) scale(.5675 .33333)">
            <path d="M445 870C445 920 452 970 460 990C500 1035 650 1035 692 990C702 950 708 910 707 870z" fill="url(#lampD)" class="o" />
            <path d="M447 885Q575 920 706 885M449 905Q575 940 704 905M482 870C484 920 488 970 493 1010M534 870L537 1020M586 870V1023M637 870L632 1018M680 870C680 930 676 980 670 1008" />
            <path d="M318 670C295 705 270 745 271 772C272 900 878 900 879 765C878 735 855 695 835 665z" fill="url(#lampC)" class="o" />
            <path d="M271 772C272 888 878 888 879 762V785C878 912 272 912 271 795z" fill="#ddd" class="o" />
            <path d="M272 784C273 900 877 900 879 774M345 672C310 720 292 760 287 810M410 680C375 740 360 790 355 850M498 685C480 760 472 820 471 875M593 688L600 878M684 685C705 750 717 810 722 860M768 675C800 730 815 780 824 830M825 668C860 720 868 750 872 790" />
            <path d="M140 570C150 535 220 510 300 468C380 432 450 428 565 425C690 422 740 432 800 455C880 485 1000 530 1004 565C1000 695 142 695 140 570z" fill="url(#lampB)" class="o" />
            <path d="M140 570C142 693 1000 693 1004 562V588C1000 722 142 722 140 594z" fill="#ccc" class="o" />
            <path d="M140 582C142 707 1000 707 1004 576M249 632v24M417 655v26M609 660v24M794 648v22M938 612v24" />
            <path d="M296 480C300 550 850 545 853 480M296 480Q300 465 330 455M853 480Q850 465 820 455" />
            <path d="M470 462C380 500 220 550 155 600M530 468C460 520 430 600 417 658M585 470C600 540 607 600 609 662M640 466C700 520 760 580 794 648M675 460C760 490 880 560 938 615M695 445C800 470 930 520 998 580M465 455C400 470 290 550 249 632" />
            <ellipse cx="576" cy="448" rx="121" ry="22" fill="#a8a8a8" class="o" /><ellipse cx="576" cy="456" rx="108" ry="14" fill="#bbb" class="o" /><path d="M485 430v25M526 428v20M568 427v42M610 428v20M652 430v25" />
            <path d="M335 178C400 215 440 300 453 383Q575 416 697 382C705 300 760 215 812 178Q575 196 335 178z" fill="url(#lampA)" class="o" />
            <path d="M408 252Q575 276 740 252M370 185C440 230 480 300 491 393M490 186C520 220 530 310 536 396M592 186L584 398M690 186C650 220 640 310 630 395M775 184C710 230 680 300 670 390M345 182C410 225 440 300 460 385" />
            <ellipse cx="574" cy="156" rx="247" ry="14" fill="#888" class="o" /><path d="M327 153V175C380 190 770 190 821 174V153C770 170 380 170 327 153z" fill="#bbb" class="o" /><path d="M327 164C380 180 770 180 821 164M397 165v18M491 167v18M592 167v18M691 166v18M772 162v18M480 148l10 16M560 146v20M640 148l-6 16M720 149l-10 12M405 149l12 12" />
            <g stroke="#a30d10"><ellipse cx="577" cy="1388" rx="237" ry="146" fill="url(#redTop)" fill-opacity=".95" stroke-width="2" /><path d="M342 1380C350 1220 800 1215 814 1375" fill="none" /><path d="M350 1430L775 1405M350 1463L785 1437M348 1498L792 1470M350 1430L346 1508M404 1428V1508M458 1424L459 1508M512 1421L516 1508M565 1417L573 1508M618 1414L631 1508M670 1411L690 1508M722 1408L747 1508M775 1405L802 1508M812 1352C760 1375 725 1430 718 1490M814 1365C770 1385 735 1430 725 1490" fill="none" /><path d="M425 1478Q470 1510 500 1508Q573 1470 650 1508Q700 1510 735 1475" fill="none" /></g>
            <path class="axis" d="M548 1255L573 1508" />
            <path d="M926 1216C905 1330 860 1430 811 1508M927 1248C905 1360 870 1440 829 1508" />
          </g>
        </svg>
      </div>
      <div class="vp">
        <svg viewBox="93 889 1008 617" preserveAspectRatio="none">
          {#each range(925, 1506, 57.3) as y, i}<path d="M93 {y}H1101" stroke={i % 5 === 0 ? '#7f858c' : '#8e949b'} />{/each}
          {#each range(117.500, 1101, 57.3) as x, i}<path d="M{x} 889V1506" stroke={i % 5 === 3 ? '#7f858c' : '#90969d'} />{/each}
        </svg>
        <span class="vlabel">Front</span>
      </div>
      <div class="vp">
        <svg viewBox="1105 889 1006 617">
          {#each range(899.500, 1506, 57.4) as y, i}<path d="M1105 {y}H2111" stroke={i % 5 === 1 ? '#80858c' : '#90969d'} stroke-width="1.200" />{/each}
          {#each range(1128, 2111, 57.4) as x, i}<path d="M{x} 889V1506" stroke={i % 5 === 0 ? '#80858c' : '#90969d'} stroke-width="1.200" />{/each}
          <path d="M1702 890V1244" stroke="#4a9650" stroke-width="2" />
          <path d="M1702 1244H2111" stroke="#a04a4e" stroke-width="2" />
          <path d="M1584 889L1588 900H1817L1820 889M1588 889V900M1595 889V900M1620 889V900M1659 889V900M1680 889V900M1702 889V900M1724 889V900M1745 889V900M1783 889V900M1809 889V900M1588 894.500H1817" fill="none" stroke="#000" stroke-width="1.300" /><path d="M1588 899.500H1817" stroke="#000" stroke-width="2.200" />
          <path d="M1472.500 1129.500H1932V1140C1860 1162 1826 1200 1817 1254.500H1588C1576 1200 1545 1162 1472.500 1140z" fill="#69383c" />
          <path d="M1472.500 1129.500H1932Q1915 1133 1904 1140C1850 1165 1826 1200 1817 1254.500H1588C1578 1195 1555 1165 1502 1140Q1490 1133 1472.500 1129.500z" fill="url(#redBowl)" />
          <path d="M1690 1254.500v-14q30-20 60 14z" fill="url(#glint)" />
          <path d="M1472.500 1129.500H1932Q1915 1133 1904 1139.500H1502Q1490 1133 1472.500 1129.500z" fill="url(#redRim)" />
          <path d="M1472.500 1129.500H1932M1472.500 1139.500H1932M1472.500 1244.500H1932M1588 1254.500H1817" stroke="#8e0a0c" stroke-width="1.200" />
          <path d="M1702 1243.500H1817" stroke="#3a0a08" stroke-width="1.500" /><path d="M1817 1243.500H1932" stroke="#14600c" stroke-width="1.500" />
          <path d="M1702 1052V1254" stroke="#000" stroke-width="1.300" /><path d="M1697 1239l10 10M1707 1239l-10 10M1702 1237v14" stroke="#a00" stroke-width="2.500" />
        </svg>
      </div>
    </section>

    <aside class="panel">
      <div class="ptabs">
        {#each panelTabs as [name, w, g], i}<div class="ptab" class:sel={i === 0} style:width="{w}px"><svg viewBox="0 0 24 24">{@html g}</svg><span>{name}</span></div>{/each}
        <svg class="pg" viewBox="0 0 24 24" color="#bbb">{@html gear}<circle cx="12" cy="12" r="3" fill="#ebecf0" /></svg>
      </div>
      <div class="pbody">
        <div class="pbtns">
          <svg class="cur" viewBox="0 0 38 38"><path d="M5 14q0-4 5-4h4l3-3h8l3 3h4q3 0 3 4v12q0 4-3 4h-24q-3 0-3-4z" fill="#2b2e31" stroke="#111" /><circle cx="22" cy="21" r="8.500" fill="#99a" stroke="#111" stroke-width="1.500" /><circle cx="22" cy="21" r="5.500" fill="#1b2a33" /><circle cx="20" cy="19" r="2" fill="#7ca59a" /></svg>
          <svg viewBox="0 0 38 38"><rect x="2" y="3" width="34" height="32" fill="#aaa" stroke="#222" stroke-width="2" /><rect x="5" y="7" width="28" height="24" fill="#ddd" stroke="#5cc3ee" stroke-width="2" /><rect x="8" y="10" width="22" height="18" fill="#fff" stroke="#e32" stroke-width="2" /></svg>
          <svg viewBox="0 0 38 38"><circle cx="30" cy="8" r="5" fill="url(#gNavy)" /><circle cx="24" cy="15" r="6.500" fill="url(#gNavy)" /><circle cx="13" cy="24" r="9" fill="url(#gNavy)" /></svg>
        </div>
        <div class="ptable">
          {#each props as [head, rows]}
            <h3>{head}</h3>
            {#each rows as [k, v, kind]}
              <div class="prow"><i></i><span class="k">{k}</span>
                <span class="v {kind || ''}">
                  {#if kind === 'btn'}<button>{v}</button>
                  {:else if kind === 'check'}<svg viewBox="0 0 20 20"><rect x=".7" y=".7" width="18.600" height="18.600" fill="#fff" stroke="#333" stroke-width="1.400" /><path d="M4 10l4 4 8-9" fill="none" stroke="#333" stroke-width="1.800" /></svg>
                  {:else}{v}{/if}
                  {#if kind === 'drop'}<em><svg viewBox="0 0 12 8"><path d="M1 1l5 5 5-5" /></svg></em>{/if}
                  {#if kind === 'dots'}<em class="dotbtn">...</em>{/if}
                </span>
              </div>
            {/each}
          {/each}
        </div>
      </div>
    </aside>
  </main>

  <div class="vtabs">
    {#each viewTabs as [name, w], i}<span class="vt" class:sel={i === 0} style:width="{w}px">{name}</span>{/each}<span class="vt plus"><svg viewBox="0 0 14 14"><path d="M5 1h4v4h4v4h-4v4h-4v-4h-4v-4h4z" fill="#fff" stroke="#666" stroke-width="1.200" /></svg></span>
  </div>
  <div class="osnap">{#each snaps as [s, w, off]}<label style:width="{w}px"><i class:off></i>{s}</label>{/each}</div>
  <div class="status">{#each status as [s, w, kind]}<span class={kind || ''} style:width="{w}px">{#if kind === 'lay'}<i></i>{/if}{s}</span>{/each}</div>

  <footer>
    <svg class="start" viewBox="0 0 24 24"><path d="M0 3.500L10.500 2v9.300H0zM11.800 1.800L24 0v11.300H11.800zM0 12.700h10.500V22L0 20.500zM11.800 12.700H24V24l-12.200-1.800z" fill="#fff" /></svg>
    <div class="search"><svg viewBox="0 0 26 26"><circle cx="16" cy="9.500" r="7.500" /><path d="M10.500 15L1.500 24" /></svg>Type here to search</div>
    <div class="cell c72"><svg viewBox="0 0 36 36"><circle cx="18" cy="18" r="11" fill="none" stroke="#fff" stroke-width="2.800" /></svg></div>
    <div class="cell c75"><svg viewBox="0 0 36 36"><path d="M6 6v4h15v-4M6 30v-4h15v4M6 13h15v10h-15zM28 6v24" fill="none" stroke="#fff" stroke-width="1.400" /><path d="M26 13h4v4h-4z" fill="#fff" /></svg></div>
    {#each apps as [k, g]}<div class="cell {k}"><svg viewBox="0 0 36 36">{@html g}</svg></div>{/each}
    <div class="tray">
      <svg viewBox="0 0 300 60"><g fill="none" stroke="#fff" stroke-width="1.600"><path d="M8 34l8.500-8.500 8.500 8.500" /><path d="M105 24h19v14h-16M108 24v-2M101 20v6h6v-6M104 26v12h4" /><path d="M150 39a20 20 0 0 1 20-18M156 39a14 14 0 0 1 14-12M162 39a8 8 0 0 1 8-7" stroke-width="1.300" /><path d="M197 26h4l6-6v20l-6-6h-4zM211 26l7 7M218 26l-7 7" /><path d="M255 36q-4-8 6-6 10 3 4 7-6 3-2-6l5-11 4 2-7 14" /></g><path d="M109 26h13v10h-13z" fill="#fff" /><circle cx="169" cy="37" r="2" fill="#fff" /><path d="M52 32q0-6 6-7 3-6 9-4 5 1 5 7 4 1 3 6l-3 2h-16q-4-1-4-4z" fill="#1684de" /><circle cx="70" cy="36" r="6.500" fill="#e02430" /><path d="M67.500 33.500l5 5M72.500 33.500l-5 5" stroke="#fff" stroke-width="1.500" /></svg>
      <div class="clock"><span>11:57 PM</span><span>5/5/2020</span></div>
      <svg class="note" viewBox="0 0 30 30"><path d="M3 2h24v19h-13l-4 5v-5h-7z" fill="#fff" /><path d="M7 7h16M7 11h16M7 15h10" stroke="#0a2c55" stroke-width="1.500" /><path d="M22 15a6 6 0 1 1-4 10q5 0 5-5 0-3-1-5z" fill="#fff" stroke="#0a2c55" /></svg>
    </div>
  </footer>

  <div class="gh">
    <div class="ghtitle"><span>Grasshopper - bowl</span><svg viewBox="0 0 160 44"><path d="M3 22h15M71.500 14.500h15v15h-15zM143 14l16 16M159 14l-16 16" fill="none" stroke="#000" stroke-width="1.200" /></svg></div>
    <div class="ghmenu">{#each ghMenu as [m, w]}<span style:width="{w}px">{m}</span>{/each}<span class="doc">bowl</span></div>
    <div class="ghtabs"><span class="par">Params</span><span class="act">Maths</span>{#each ghTabsAfter as [m, w]}<span style:width="{w}px">{m}</span>{/each}</div>
    <div class="ribbon">
      {#each groups as g}
        <div class="grp" style:width="{g.w}px">
          <div class="cols">{#each g.cols as [w, a, b]}<div class="col" style:width="{w}px"><svg viewBox="0 0 34 34">{@html R[a]}</svg>{#if b}<svg viewBox="0 0 34 34">{@html R[b]}</svg>{/if}</div>{/each}</div>
          <div class="gname"><span>{g.name}</span>{#if g.more}<svg viewBox="0 0 12 14"><path d="M6 1v11M2 7h8l-4 6z" fill="#999" stroke="#999" stroke-width="1.500" /></svg>{/if}</div>
        </div>
      {/each}
    </div>
    <div class="ghbar">
      <svg class="l1" viewBox="0 0 90 42"><path d="M9 7l4-3h13l2 3v14h-19z" fill="#f4f4f4" stroke="#444" stroke-width="1.500" /><path d="M6 18h9l4-4h13v23h-26z" fill="#6cc02f" stroke="#2f6a0c" stroke-width="1.500" /><path d="M47 4h32v33h-29l-3-3z" fill="#1d63e8" stroke="#08267a" stroke-width="1.500" /><path d="M53 5h20v13h-20z" fill="#f4f4f4" /><path d="M54 24h16v12h-16z" fill="#a9b6cc" /><path d="M57 26h5v8h-5z" fill="#124" /><path d="M88 4v34" stroke="#bbb" /></svg>
      <div class="combo">108%<svg viewBox="0 0 12 8"><path d="M1 1l5 5 5-5" /></svg></div>
      <svg class="l2" viewBox="0 0 160 42"><path d="M8 16V7h9M25 7h12v9M37 25v10h-12M17 35h-9v-10" fill="none" stroke="#111" stroke-width="5" /><path d="M19 17l6 8M25 17l-6 8" stroke="#222" stroke-width="2.500" /><path d="M48 20h8l-4 5zM107 20h8l-4 5z" fill="#000" /><path d="M66 21q16-20 32 0-16 18-32 0z" fill="#dce7ee" stroke="#345" stroke-width="2" /><circle cx="82" cy="20" r="9" fill="#2e9fe0" stroke="#0d4a78" stroke-width="1.500" /><circle cx="82" cy="20" r="4.500" fill="#021a33" /><circle cx="79.500" cy="17" r="2" fill="#fff" /><path d="M130 36l6-17q9-6 17-13l2 13q-7 11-25 17z" fill="#dd3a2e" stroke="#7e120b" /><path d="M130 36l5-14 10 8z" fill="#f5d9a8" /><path d="M123 19q6-2 4 6t2 10q4 1 5-3" fill="none" stroke="#511" stroke-width="2.500" /></svg>
      <svg class="l3" viewBox="0 0 276 42"><path d="M6 15l5-9 10-1 7 5-2 14-10 4-9-4z" fill="url(#gSteel)" stroke="#888" /><path d="M4 27l8-5h9l7 4-2 6q-10 8-20 0z" fill="#3a3a3a" stroke="#111" /><path d="M44 17l12-12q12-4 19 4 3 8-3 14L61 36q-10 2-17-5-2-8 0-14z" fill="#f2f2f2" stroke="#333" stroke-width="1.500" /><ellipse cx="66" cy="14" rx="8" ry="6" transform="rotate(40 66 14)" fill="none" stroke="#333" stroke-width="1.300" /><ellipse cx="53" cy="27" rx="7" ry="5" transform="rotate(40 53 27)" fill="none" stroke="#555" /><rect x="79.500" y="1.500" width="39" height="39" fill="#e5f1fb" stroke="#0078d7" stroke-width="1.500" /><path d="M84 19l11-13q11-3 18 4 2 8-1 15l-13 11q-9 1-15-6-2-6 0-11z" fill="url(#gRed)" stroke="#5c0603" /><ellipse cx="105" cy="14" rx="7" ry="5" transform="rotate(40 105 14)" fill="#e03a30" stroke="#8c0d08" /><path d="M127 6v30M217.500 6v30" stroke="#bbb" /><path d="M138 20l14-15q12-1 17 6 1 8-4 12L157 32z" fill="#5cae27" stroke="#27590a" /><path d="M138 20l19 14-8 2q-9-2-12-9z" fill="#ddd" stroke="#888" /><ellipse cx="161" cy="14" rx="6" ry="5" fill="#2d6b0d" /><path d="M140 8l25 30" stroke="#222" stroke-width="1.600" /><circle cx="195" cy="20" r="14.500" fill="url(#gSteel)" stroke="#444" stroke-width="1.500" /><path d="M195 5.500a14.500 14.500 0 0 0 0 29z" fill="#e9922a" stroke="#7c4305" /><path d="M228 17l5-8 9-3 9 4 4 10-4 11-10 4-10-5z" fill="#6cb9f2" stroke="#1d4f86" stroke-width="1.800" /><path d="M233 10l9-3 6 8-14 5z" fill="#bfe2fb" /><path d="M262 19h8l-4 5z" fill="#000" /></svg>
    </div>
    <div class="canvas">
      <svg viewBox="136 393 1102 1041">
        <g stroke="#b9b4aa" stroke-width="1.300">
          {#each range(397.300, 1434, 54.150) as y}<path d="M136 {y}H1238" />{/each}
          {#each range(224, 1238, 162.6) as x}<path d="M{x} 393V1434" />{/each}
        </g>
        <g fill="none" stroke="#1c1c18" stroke-opacity=".72" stroke-width="2.800">
          {#each wires as [x1, y1, x2, y2, l]}<path d="M{x1} {y1}C{x1 + l} {y1} {x2 - l} {y2} {x2} {y2}" />{/each}
        </g>
        {#each nodes as n}
          <g class="port">
            {#each n.ins as [, y]}<circle cx={n.x} cy={y + 0.5} r="4" />{/each}
            {#each n.outs as [, y]}<circle cx={n.x + n.w} cy={y + 0.5} r="4" />{/each}
          </g>
          <rect x={n.x} y={n.y} width={n.w} height={n.h} rx="3.500" fill={n.purple ? 'url(#gPurple)' : 'url(#gNode)'} stroke="#383838" stroke-width="1.400" />
          <rect x={n.tx} y={n.y + 2} width="26" height={n.h - 4} rx="3.500" fill="url(#gDark)" stroke="#0a0a0a" stroke-width="1.300" />
          <text class="ttl" transform="translate({n.tx + 18} {n.y + n.h / 2}) rotate(-90)" textLength={n.tl} lengthAdjust="spacingAndGlyphs">{n.title}</text>
          {#each n.ins as [s, y]}<text x={n.tx - 6} {y} dy="4.300" text-anchor="end">{s}</text>{/each}
          {#each n.outs as [s, y]}<text x={n.tx + 31} {y} dy="4.300">{s}</text>{/each}
        {/each}
        {#each sliders as s}
          <circle class="prt" cx={s.x + s.w} cy={s.y + 11} r="4" />
          <rect x={s.x} y={s.y} width={s.w} height="21.500" rx="3.500" fill="url(#gNode)" stroke="#333" stroke-width="1.400" />
          <path d="M{s.s} {s.y}H{s.x + 3.5}q-3.500 0-3.500 3.500V{s.y + 18}q0 3.500 3.500 3.500H{s.s}z" fill="url(#gPurple)" stroke="#333" stroke-width="1.400" />
          <path d="M{s.a} {s.y + 11}H{s.b}" stroke="#b0b0b0" />
          {#each range(s.a, s.b + 1, (s.b - s.a) / 10) as x}<path d="M{x} {s.y + 7}v4" stroke="#b0b0b0" />{/each}
          {#if s.label}<text x={s.lx} y={s.y + 14} textLength={s.lw} lengthAdjust="spacingAndGlyphs">{s.label}</text>{/if}
          <text x={s.vx} y={s.y + 14.5} text-anchor="middle">{s.v}</text>
          {#if s.round}<circle cx={s.k} cy={s.y + 10.5} r="3.300" fill="#fff" stroke="#000" stroke-width="2" />{:else}<path d="M{s.k - 3.5} {s.y + 10.5}l3.500-3.500 3.500 3.500-3.500 3.500z" fill="#fff" stroke="#000" stroke-width="1.500" />{/if}
        {/each}
        <circle class="prt" cx="324" cy="1037.500" r="4" /><circle class="prt" cx="378.500" cy="1037.500" r="4" />
        <rect x="324" y="1026.500" width="54.500" height="21.500" rx="3.500" fill="url(#gPurple)" stroke="#333" stroke-width="1.400" /><text x="350.500" y="1041" text-anchor="middle">0</text>
        <path d="M1156 1359l12 2 4 4 6-6 10-3 8 2v5q-18 0-30 22l-3 4v-12l-3-4 2-6z" fill="#000" />
        <circle cx="1193" cy="1390" r="30" fill="#fff" stroke="#555" stroke-width="1.500" /><circle cx="1193" cy="1390" r="27" fill="url(#compass)" />
        <path d="M1171 1375l5-11 6 10zM1215 1375l-5-11-6 10zM1171 1405l5 11 6-10zM1215 1405l-5 11-6-10z" fill="#fff" />
        <path d="M137 1392h9v42h-9z" fill="#999" stroke="#000" stroke-width="1.300" /><path d="M137.500 1393h8v14h-8z" fill="#ccc" />
      </svg>
    </div>
    <div class="ghstatus"><span>...</span><span class="ver">1.0.0007</span><svg viewBox="0 0 12 12"><path d="M9 0h3v3h-3zM9 4.500h3v3h-3zM4.500 4.500h3v3h-3zM9 9h3v3h-3zM4.500 9h3v3h-3zM0 9h3v3h-3z" fill="#aaa" /></svg></div>
  </div>
</div>

<style>
  :global(body) { background: #ebecf0; }
  .defs { position: absolute; }
  .screen { position: relative; width: 2496px; height: 1664px; overflow: hidden; display: flex; flex-direction: column; background: #ebecf0; font: 16.500px/1 "Open Sans", "Noto Sans", sans-serif; color: #1a1a1a; }
  .screen * { box-sizing: border-box; }
  svg { display: block; flex: none; }
  span, em, b { white-space: nowrap; font-style: normal; }
  .title { height: 34px; background: #fff; display: flex; align-items: center; padding-left: 2px; color: #999; flex: none; }
  .logo { width: 24px; height: 24px; }
  .cap { margin-left: 5px; }
  .winbtns { margin-left: auto; width: 184px; height: 34px; }
  .menu { height: 28px; background: #fff; display: flex; align-items: center; padding: 4px 0 0 8px; color: #666; flex: none; }
  .command { height: 115px; flex: none; padding: 5px 0 0 10px; border-bottom: 2px solid #dcdee8; }
  .hist { height: 78px; background: #fff; display: flex; justify-content: space-between; overflow: hidden; }
  .lines { padding-top: 4px; }
  .lines p { margin: 0; height: 25px; line-height: 25px; padding-left: 1px; white-space: nowrap; letter-spacing: .150px; }
  .lines p:nth-child(3) { height: 24px; }
  .sbar { width: 28px; background: #f0f0f0; display: flex; flex-direction: column; align-items: center; padding: 12px 0; gap: 8px; }
  .sbar i { width: 26px; height: 26px; background: #cdcdcd; }
  .sbar svg, .combo svg, .v em svg { width: 12px; height: 8px; fill: none; stroke: #444; stroke-width: 1.500; }
  .prompt { height: 29px; background: #fff; border-top: 1px solid #c3c8de; display: flex; align-items: center; padding-left: 1px; letter-spacing: .200px; }
  .spin { margin: 0 2px 0 auto; width: 24px; height: 28px; display: flex; flex-direction: column; }
  .spin svg { width: 24px; height: 14px; background: #e4e4e4; border: 1px solid #999; fill: #111; }
  .tooltabs { height: 34px; flex: none; padding-top: 5px; display: flex; border-bottom: 1px solid #c0c6da; }
  .std { width: 111px; margin-left: 10px; border: 1px solid #c0c6da; border-bottom: 0; border-radius: 6px 5px 0 0; text-align: center; line-height: 29px; padding-right: 2px; letter-spacing: .150px; }
  .hiddentabs { width: 1060px; background: #d6d6d8; }
  .tab { line-height: 29px; height: 28px; background: #d6d6d6; border-top: 1px solid #c0c6da; border-right: 1px solid #c0c6da; border-radius: 0 5px 0 0; flex: none; white-space: nowrap; letter-spacing: .200px; }
  .tab.first { width: 116px; text-align: right; padding-right: 20px; }
  .tab.slant { margin-left: -16px; padding-left: 35px; border-top: 0; line-height: 31px; background: linear-gradient(128.400deg, transparent 18px, #c0c6da 18px, #c0c6da 19.500px, #d6d6d6 19.500px); }
  .gear { width: 22px; height: 22px; margin: 2px 2px 0 auto; }
  .toolbar { height: 54px; flex: none; display: flex; }
  .toolbar svg { width: 130px; height: 54px; }
  .toolbar .rt { width: 160px; margin-left: 1111px; }
  main { height: 1241px; flex: none; display: flex; }
  .tools { width: 84px; margin-right: 9px; padding-top: 9px; display: grid; grid-template-columns: 42px 42px; grid-auto-rows: 42.100px; align-content: start; }
  .tools svg { width: 42px; height: 42px; overflow: visible; }
  .views { width: 2018px; display: grid; grid-template-columns: 1008px 1006px; grid-template-rows: 618px 617px; gap: 6px 4px; }
  .vp { background: #9da3aa; overflow: hidden; display: grid; }
  .vp svg { width: 100%; height: 100%; grid-area: 1 / 1; }
  .vlabel { grid-area: 1 / 1; align-self: start; justify-self: start; width: 80px; height: 28px; line-height: 28px; padding-left: 12px; background: #c8cdd5; color: #555a60; font-weight: 700; font-size: 17px; }
  .mesh path, .mesh ellipse { vector-effect: non-scaling-stroke; }
  .mesh > path:not(.o) { fill: none; stroke: #111; stroke-width: 1; }
  .mesh > path.axis { stroke: #6d2c0c; stroke-width: 1.500; }
  .mesh > .o { stroke: #000; stroke-width: 1.600; }
  .panel { width: 377px; margin-left: 8px; display: flex; flex-direction: column; height: 1275px; border-top: 1px solid #c9cee0; margin-top: -3px; }
  .ptabs { height: 44px; padding-top: 13px; display: flex; flex: none; }
  .ptab { height: 31px; flex: none; display: flex; align-items: center; gap: 3px; padding-left: 5px; background: #d8d8d8; border-top: 1px solid #c0c6da; border-left: 1px solid #c0c6da; border-radius: 8px 0 0 0; }
  .ptab.sel { background: #f7f7f9; }
  .ptab:nth-child(6) { clip-path: polygon(0 0, 60% 0, 100% 100%, 0 100%); }
  .ptab svg { width: 22px; height: 22px; }
  .pg { width: 23px; height: 23px; margin: 4px 0 0 -9px; }
  .pbody { flex: 1; background: #f7f7f9; border: 1px solid #c0c6da; padding: 3px 7px 0 3px; }
  .pbtns { display: flex; gap: 4px; height: 42px; }
  .pbtns svg { width: 38px; height: 38px; background: #e1e1e1; border: 1px solid #adadad; }
  .pbtns .cur { background: #b3d2ee; border-color: #0b5cab; }
  .ptable { border: 1px solid #e7e8ee; }
  h3 { font-weight: 400; font-size: 19px; margin: 0; height: 38px; line-height: 40px; padding-left: 3px; color: #111; }
  .prow { display: flex; height: 30.950px; border-top: 1px solid #e7e8ee; background: #fff; }
  .prow i { width: 27px; background: #f7f7f9; }
  .k { width: 154px; padding-left: 4px; line-height: 30px; border-right: 1px solid #e7e8ee; }
  .v { flex: 1; padding-left: 5px; line-height: 30px; display: flex; align-items: center; }
  .v.ro { background: #ebecf0; }
  .v.btn { padding: 1px 0 0 2px; }
  .v.check { padding-left: 4px; }
  .v.check svg { width: 20px; height: 20px; }
  .v button { width: 100%; height: 29px; font: inherit; line-height: 24px; background: #e1e1e1; border: 1px solid #adadad; padding: 0; color: #111; }
  .v em { margin-left: auto; width: 30px; height: 29px; background: #e1e1e1; border: 1px solid #adadad; display: grid; place-items: center; }
  .dotbtn { line-height: 20px; }
  .vtabs { height: 42px; flex: none; padding: 3px 0 0 93px; display: flex; width: 2000px; }
  .vt { height: 30px; line-height: 31px; background: #d6d6d6; border: 1px solid #c0c6da; border-top: 0; border-radius: 0 0 6px 12px; padding: 0 0 0 14px; flex: none; }
  .vt:nth-child(n + 2) { padding-left: 16px; }
  .vt.sel, .vt.plus { background: #ebecf0; }
  .vt.plus { width: 44px; padding: 8px 0 0 17px; }
  .plus svg { width: 14px; height: 14px; }
  .osnap { height: 31px; flex: none; display: flex; padding-left: 14px; }
  .osnap label { display: flex; align-items: center; gap: 5px; height: 33px; }
  .osnap i { width: 20px; height: 20px; background: #fff; border: 1px solid #333; flex: none; }
  .osnap i.off { background: #e0e0e0; border-color: #b8b8b8; }
  .status { height: 25px; flex: none; display: flex; border-top: 1px solid #b9bfd6; }
  .status span { border-right: 1px solid #c3c8dc; text-align: center; line-height: 25px; height: 24px; overflow: hidden; flex: none; }
  .status .on { background: #e1f1fb; font-weight: 700; letter-spacing: -.200px; }
  .status .lay { display: flex; align-items: center; padding-left: 4px; gap: 3px; }
  .status .lay i { width: 17px; height: 17px; background: #000; }
  .status .tol { text-align: left; padding-left: 2px; letter-spacing: .080px; }
  footer { height: 60px; flex: none; display: flex; align-items: center; background: linear-gradient(90deg, #0e3a59 0, #0b3557 50%, #082b56 80%, #072850 100%); }
  .start { width: 24px; height: 24px; margin: 0 24px; }
  .search { width: 516px; height: 58px; background: #35536a; border: 2px solid #56707f; display: flex; align-items: center; font-size: 20.500px; color: #d3dbe1; padding-left: 16px; gap: 16px; }
  .search svg { width: 26px; height: 26px; fill: none; stroke: #fff; stroke-width: 1.700; }
  .cell { width: 75px; height: 60px; display: grid; place-items: center; border-bottom: 3px solid transparent; padding-top: 3px; flex: none; }
  .cell svg { width: 34px; height: 34px; overflow: visible; }
  .c72 { width: 72px; }
  .under { border-bottom-color: #85bfe8; background-clip: padding-box; }
  .outlook { background: #84644c; border-bottom-color: #ff7300; }
  .active { background: #0a5796; border-bottom-color: #9ccdf0; }
  .tray { margin-left: auto; display: flex; align-items: center; height: 60px; padding-right: 7px; }
  .tray > svg { width: 300px; height: 60px; margin-right: 9px; }
  .clock { display: flex; flex-direction: column; gap: 12px; color: #fff; font-size: 17px; width: 74px; align-items: center; letter-spacing: .100px; margin-right: 2px; }
  .tray .note { width: 30px; height: 30px; margin: 0 28px 0 28px; }

  .gh { position: absolute; left: 134px; top: 98px; width: 1106px; height: 1368px; border: 1px solid #4f5357; background: #f0f0f0; display: flex; flex-direction: column; box-shadow: 0 10px 26px 2px rgba(0, 0, 0, .42); padding-left: 1px; }
  .ghtitle { height: 44px; flex: none; background: #fff; display: flex; align-items: center; justify-content: space-between; padding: 0 24px 0 10px; }
  .ghtitle svg { width: 160px; height: 44px; }
  .ghmenu { height: 41px; flex: none; background: linear-gradient(90deg, #f0f0f0 30%, #fdfdfd); display: flex; align-items: center; padding: 2px 0 0 16px; }
  .doc { margin: 0 13px 0 auto; }
  .ghtabs { height: 34px; flex: none; display: flex; align-items: center; font: 16.200px "Liberation Sans", sans-serif; color: #777; border-bottom: 1px solid #9a9a9a; padding: 1px 0 0 12px; }
  .par { width: 68px; }
  .act { width: 70px; height: 34px; margin: 0 12px -2px 0; background: #fff; border: 1px solid #9a9a9a; border-bottom: 0; border-radius: 8px 8px 0 0; color: #111; font: 16.500px/28px "Open Sans", sans-serif; text-align: center; padding-right: 1px; position: relative; }
  .ribbon { height: 131px; flex: none; border-bottom: 2px solid #8f8f8f; background: linear-gradient(#d6d6d6, #f0f0f0 95%); display: flex; gap: 5px; padding: 3px 0 0 3px; }
  .grp { height: 110px; border: 1px solid #777; border-radius: 6px; overflow: hidden; background: linear-gradient(#ddd, #e6e6e6); display: flex; flex-direction: column; flex: none; }
  .cols { height: 88px; display: flex; padding-top: 5px; flex: none; }
  .col { display: flex; flex-direction: column; gap: 9px; align-items: center; flex: none; }
  .col svg { width: 34px; height: 34px; overflow: visible; }
  .gname { flex: 1; background: linear-gradient(#3a3a3a, #141414); color: #fff; font-size: 14.500px; display: flex; align-items: center; justify-content: center; }
  .gname span { flex: 1; text-align: center; margin-top: -4px; }
  .gname svg { width: 11px; height: 12px; margin: -2px 4px 0 0; }
  .ghbar { height: 43px; flex: none; display: flex; align-items: center; background: linear-gradient(#fff, #efefef); border-bottom: 1px solid #ddd; }
  .l1 { width: 90px; height: 42px; margin-right: 3px; }
  .combo { width: 202px; height: 33px; border: 1px solid #555; background: #fff; display: flex; align-items: center; justify-content: space-between; padding: 1px 6px 0 4px; margin-top: 1px; }
  .l2 { width: 160px; height: 42px; }
  .l3 { width: 276px; height: 42px; margin-left: auto; }
  .canvas { height: 1041px; flex: none; background: #d4cfc7; width: 1102px; overflow: hidden; }
  .canvas svg { width: 1102px; height: 1041px; }
  .canvas text { font: 12px "Open Sans", sans-serif; fill: #1c1c1c; }
  .canvas .ttl { font-weight: 700; font-size: 14px; fill: #fff; text-anchor: middle; }
  .port circle, .prt { fill: #fff; stroke: #000; stroke-width: 2; }
  .ghstatus { flex: 1; border-top: 2px solid #fff; box-shadow: inset 0 1px #d0d0d0; display: flex; align-items: center; padding: 0 2px 0 9px; color: #777; }
  .ghstatus > span:first-child { color: #000; }
  .ver { margin: 0 35px 0 auto; }
  .ghstatus svg { width: 12px; height: 12px; align-self: flex-end; margin-bottom: 4px; }
</style>
